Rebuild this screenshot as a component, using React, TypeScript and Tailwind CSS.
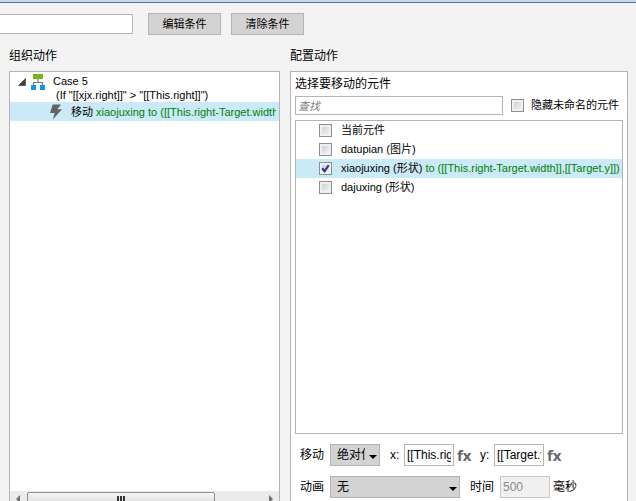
import type { InputHTMLAttributes, ReactNode } from "react";

const widgets = [
  { id: "current", name: "当前元件", target: "", checked: false },
  { id: "datupian", name: "datupian (图片)", target: "", checked: false },
  {
    id: "xiaojuxing",
    name: "xiaojuxing (形状)",
    target: "to ([[This.right-Target.width]],[[Target.y]])",
    checked: true,
  },
  { id: "dajuxing", name: "dajuxing (形状)", target: "", checked: false },
];

function Checkbox(props: InputHTMLAttributes<HTMLInputElement>) {
  return (
    <span className="relative flex h-[13px] w-[13px] shrink-0">
      <input
        type="checkbox"
        className="peer h-[13px] w-[13px] appearance-none border border-[#8e8f8f] bg-linear-to-br from-[#c6cad0] to-[#f8f8f8] shadow-[inset_0_0_0_2px_#f0f0f0]"
        {...props}
      />
      <svg
        viewBox="0 0 13 13"
        className="pointer-events-none absolute inset-0 hidden h-[13px] w-[13px] peer-checked:block"
        fill="none"
        stroke="#2f3a86"
        strokeWidth="2.2"
      >
        <path d="M3.2 6.2l2.4 3L9.8 3.2" />
      </svg>
    </span>
  );
}

function ActionButton({ children }: { children: ReactNode }) {
  return (
    <button className="h-[22px] w-[73px] border border-[#b4b4b4] bg-[#d3d3d3] text-[11px] leading-5">
      {children}
    </button>
  );
}

function Select({
  id,
  value,
  className,
}: {
  id: string;
  value: string;
  className: string;
}) {
  return (
    <span className={`relative flex ${className}`}>
      <select
        id={id}
        className="h-[22px] w-full appearance-none border border-[#b4b4b4] bg-[#d3d3d3] pl-1.5 pr-3.5 text-[12px] leading-5"
      >
        <option>{value}</option>
      </select>
      <svg
        viewBox="0 0 8 4"
        className="pointer-events-none absolute right-[3px] top-[11px] h-1 w-2"
      >
        <path d="M0 0h8L4 4Z" fill="#000" />
      </svg>
    </span>
  );
}

function FxButton({ label }: { label: string }) {
  return (
    <button
      aria-label={label}
      className="w-4 text-left font-['Open_Sans',sans-serif] text-[15px] leading-5 font-bold text-[#666]"
    >
      fx
    </button>
  );
}

function CaseTree() {
  return (
    <div className="min-h-0 flex-1 overflow-hidden text-[11px] leading-[14px] whitespace-nowrap">
      <div className="flex pt-0.5 pl-2">
        <svg viewBox="0 0 8 8" className="mt-1 h-2 w-2 shrink-0">
          <path d="M7.5 0.5v7h-7Z" fill="#404040" stroke="#333" strokeWidth="0.6" />
        </svg>
        <svg viewBox="0 0 14 16" className="ml-[5px] h-4 w-3.5 shrink-0">
          <path
            d="M7 4v5M2.5 12V8.5h9V12"
            fill="none"
            stroke="#777"
            strokeWidth="1.2"
          />
          <path d="M2 0h10v5H2z" fill="#76b813" />
          <path d="M0 11h5v5H0zM9 11h5v5H9z" fill="#0a9bdc" />
        </svg>
        <div className="ml-2">
          <p>Case 5</p>
          <p className="pl-[3px]">{'(If "[[xjx.right]]" > "[[This.right]]")'}</p>
        </div>
      </div>
      <div className="flex h-[19px] items-center bg-[#cbeaf7] pr-[3px] pl-10">
        <svg viewBox="0 0 13 16" className="h-4 w-3 shrink-0">
          <path d="M3 0h9L8 5h5L3 16l2-7H0Z" fill="#636363" />
        </svg>
        <p className="ml-[9px] overflow-hidden">
          移动{" "}
          <span className="text-[#008000]">
            xiaojuxing to ([[This.right-Target.width
          </span>
        </p>
      </div>
    </div>
  );
}

function TreeScrollbar() {
  return (
    <div className="flex h-2.5 shrink-0 justify-between overflow-hidden bg-[#ebebeb] px-1.5">
      <svg viewBox="0 0 4 8" className="mt-1 h-2 w-1 shrink-0">
        <path d="M4 0v8L0 4Z" fill="#707070" />
      </svg>
      <div className="mx-[7px] flex-1">
        <div className="mt-px flex h-4 w-4/5 justify-center gap-px rounded-xs border border-[#8f8f8f] bg-linear-to-b from-[#f6f6f6] to-[#d4d4d4] pt-[3px]">
          <i className="h-2 w-0.5 bg-[#333]" />
          <i className="h-2 w-0.5 bg-[#333]" />
          <i className="h-2 w-0.5 bg-[#333]" />
        </div>
      </div>
      <svg viewBox="0 0 4 8" className="mt-1 h-2 w-1 shrink-0">
        <path d="M0 0v8l4-4Z" fill="#707070" />
      </svg>
    </div>
  );
}

function WidgetPicker() {
  return (
    <>
      <h3 className="text-[12px] leading-6">选择要移动的元件</h3>
      <div className="flex items-center gap-2">
        <input
          type="search"
          aria-label="查找"
          placeholder="查找"
          className="h-[19px] min-w-0 flex-1 border border-[#b4b4b4] bg-white px-0.5 text-[11px] italic placeholder:text-[#808080]"
        />
        <label className="mr-1 flex items-center gap-[7px] text-[11px]">
          <Checkbox />
          隐藏未命名的元件
        </label>
      </div>
      <ul className="mt-[5px] min-h-0 flex-1 overflow-hidden border border-[#b4b4b4] text-[11px] whitespace-nowrap">
        {widgets.map((widget) => (
          <li key={widget.id} className={widget.checked ? "bg-[#cbeaf7]" : ""}>
            <label className="flex h-[19px] items-center pl-[23px]">
              <Checkbox defaultChecked={widget.checked} />
              <span className="ml-[9px]">
                {widget.name}{" "}
                <span className="text-[#008000]">{widget.target}</span>
              </span>
            </label>
          </li>
        ))}
      </ul>
    </>
  );
}

function MoveSettings() {
  return (
    <div className="flex flex-col gap-2.5 pt-2.5 pb-[3px] pl-[5px] text-[12px]">
      <div className="flex items-center">
        <label htmlFor="move" className="w-[30px]">
          移动
        </label>
        <Select id="move" value="绝对位置" className="w-[50px]" />
        <label htmlFor="x" className="ml-2.5 w-3.5">
          x:
        </label>
        <input
          id="x"
          defaultValue="[[This.right-Target.width]]"
          className="mr-[3px] h-[22px] w-[50px] border border-[#b4b4b4] bg-white px-0.5"
        />
        <FxButton label="x fx" />
        <label htmlFor="y" className="ml-[7px] w-3.5">
          y:
        </label>
        <input
          id="y"
          defaultValue="[[Target.y]]"
          className="mr-[3px] h-[22px] w-[50px] border border-[#b4b4b4] bg-white px-0.5"
        />
        <FxButton label="y fx" />
      </div>
      <div className="flex items-center">
        <label htmlFor="animate" className="w-[30px]">
          动画
        </label>
        <Select id="animate" value="无" className="w-[130px]" />
        <label htmlFor="time" className="ml-2.5 w-[30px]">
          时间
        </label>
        <input
          id="time"
          disabled
          defaultValue="500"
          className="mr-[3px] h-[22px] w-[50px] border border-[#c8c8c8] bg-[#f0f0f0] px-0.5 text-[#8c8c8c]"
        />
        <span>毫秒</span>
      </div>
    </div>
  );
}

export default function App() {
  return (
    <div className="flex h-screen flex-col overflow-hidden border-t-2 border-[#c3dcf5] bg-[#f3f3f3] font-['Liberation_Sans','Noto_Sans_CJK_SC',sans-serif] text-black">
      <header className="flex items-center gap-2.5 border-t border-[#5f7083] pt-2.5">
        <input
          type="text"
          aria-label="Case"
          className="mr-[5px] h-5 w-[133px] border border-l-0 border-[#b4b4b4] bg-white px-1 text-[11px]"
        />
        <ActionButton>编辑条件</ActionButton>
        <ActionButton>清除条件</ActionButton>
      </header>

      <main className="flex min-h-0 flex-1 gap-2.5 pt-[11px] pr-2 pl-[9px]">
        <section className="flex w-[271px] shrink-0 flex-col">
          <h2 className="mb-[5px] text-[12px] leading-5">组织动作</h2>
          <div className="flex min-h-0 flex-1 flex-col border border-b-0 border-[#b4b4b4] bg-white">
            <CaseTree />
            <TreeScrollbar />
          </div>
        </section>

        <section className="flex min-w-0 flex-1 flex-col">
          <h2 className="mb-[5px] text-[12px] leading-5">配置动作</h2>
          <div className="flex min-h-0 flex-1 flex-col border border-b-0 border-[#b4b4b4] bg-white px-1">
            <WidgetPicker />
            <MoveSettings />
          </div>
        </section>
      </main>
    </div>
  );
}
